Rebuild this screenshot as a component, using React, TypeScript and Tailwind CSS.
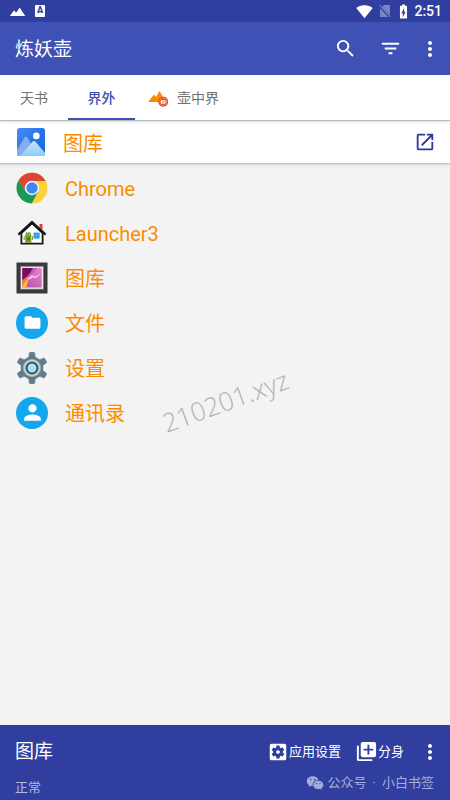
import React from "react";
import {
  MdBatteryChargingFull,
  MdFilterList,
  MdFolder,
  MdLibraryAdd,
  MdMoreVert,
  MdOpenInNew,
  MdPerson,
  MdSearch,
  MdSettingsApplications,
  MdSignalWifi4Bar,
} from "react-icons/md";
import { RiWechatFill } from "react-icons/ri";

function Peaks({ className }: { className: string }) {
  return (
    <svg viewBox="0 0 20 12" className={className} fill="currentColor" aria-hidden="true">
      <path d="M0 12 5.5 4.6 7 6.6 3.4 12ZM4.4 12 8 6.2 9.2 7.7 13 1.2 20 12Z" />
      <path d="M0 12 5.5 4.6 8 8l5-7 7 11Z" />
    </svg>
  );
}

function PeaksBadge() {
  return (
    <svg viewBox="0 0 22 18" className="h-[18px] w-[22px]" aria-hidden="true">
      <path d="M1 13 7 5.5l2 2.4L12.5 2l6.5 11Z" fill="#fb8c00" />
      <circle cx="16.2" cy="12.8" r="5" fill="#e64a19" />
      <circle cx="16.2" cy="12.8" r="3.7" fill="none" stroke="#f7b49d" strokeWidth=".5" />
      <rect x="13.8" y="11.2" width="4.8" height="3.6" rx="1" fill="#fff" />
      <path d="M15 13h2.4" stroke="#e64a19" strokeWidth=".9" />
    </svg>
  );
}

function PhotosIcon() {
  return (
    <svg viewBox="0 0 28 28" className="h-7 w-7" aria-hidden="true">
      <defs>
        <linearGradient id="sky" x1="0" y1="0" x2="1" y2="1">
          <stop offset="0" stopColor="#4a8df2" />
          <stop offset=".55" stopColor="#2472ea" />
          <stop offset="1" stopColor="#1b65df" />
        </linearGradient>
        <linearGradient id="snow" x1="0" y1="0" x2="0" y2="1">
          <stop offset="0" stopColor="#c3e4fc" />
          <stop offset="1" stopColor="#90cbf8" />
        </linearGradient>
        <clipPath id="photo-frame">
          <rect width="28" height="28" rx="2.5" />
        </clipPath>
      </defs>
      <g clipPath="url(#photo-frame)">
        <rect width="28" height="28" fill="url(#sky)" />
        <path d="M0 22 7.5 9.5Q9 7.5 10.5 9.5L21 28H0Z" fill="#83aeea" />
        <path d="M3 28 15.5 13.8q1.5-1.8 3 0L28 25v3Z" fill="url(#snow)" />
        <circle cx="19.3" cy="7.9" r="3.3" fill="#fff" />
      </g>
    </svg>
  );
}

function ChromeIcon() {
  return (
    <svg viewBox="0 0 32 32" className="h-8 w-8" aria-hidden="true">
      <circle cx="16" cy="16" r="15.5" fill="#fdd03c" />
      <path d="M16 16 9.8 19.6 2.6 8.2A15.5 15.5 0 0 0 15.7 31.5L22.2 19.6Z" fill="#169a5b" />
      <path d="M2.6 8.2A15.5 15.5 0 0 1 29.6 8.9H16A7.1 7.1 0 0 0 9.8 19.6Z" fill="#dc4637" />
      <circle cx="16" cy="16" r="7.2" fill="#f4f4f4" />
      <circle cx="16" cy="16" r="5.7" fill="#4285f4" />
    </svg>
  );
}

function HouseIcon() {
  return (
    <svg viewBox="0 0 32 32" className="h-8 w-8" aria-hidden="true">
      <path d="M23.5 7h3v6l-3-2.8Z" fill="#e53935" />
      <path d="M5.4 16 16 6.3 26.6 16v10.6H5.4Z" fill="#fff" stroke="#161616" strokeWidth="1.8" />
      <path d="M2.4 17.6 16 5.2l13.6 12.4" fill="none" stroke="#161616" strokeWidth="2.4" />
      <path d="M9.3 18.5a3 3 0 0 1 6 0v7.2h-6Z" fill="#769b22" />
      <path d="m10.2 14.8.9 1.4m3.3-1.4-.9 1.4" stroke="#769b22" strokeWidth=".8" />
      <path d="M8.2 19v4m8.2-4v4" stroke="#769b22" strokeWidth="1" />
      <path d="M10.8 17.6h.8m1.4 0h.8" stroke="#fff" strokeWidth=".9" />
      <path d="M11 20.5h2.8v2.6H11Z" fill="#50751a" />
      <rect x="17.6" y="15.6" width="6" height="6" fill="#2999e6" />
      <path d="M20.6 15.6v6m-3-3h6" stroke="#67baf0" strokeWidth=".5" />
    </svg>
  );
}

function FrameIcon() {
  return (
    <svg viewBox="0 0 32 32" className="h-8 w-8" aria-hidden="true">
      <defs>
        <linearGradient id="petal" x1="0" y1="1" x2="1" y2="0">
          <stop offset="0" stopColor="#b44ca0" />
          <stop offset="1" stopColor="#e985d3" />
        </linearGradient>
      </defs>
      <rect x=".5" y=".5" width="31" height="31" fill="#38383c" />
      <rect x="4" y="3.8" width="24" height="24" fill="#77777b" />
      <rect x="5" y="4.8" width="22" height="22" fill="#eee6ea" />
      <rect x="6.3" y="6.1" width="19.4" height="19.4" fill="url(#petal)" />
      <path d="M6.3 6.1h11L13 13l-6.7 5Z" fill="#74105c" />
      <path d="m6.3 19 5.2-4.3 2.2 1.5-4 9.3H6.3Z" fill="#f57c32" />
      <path d="m6.3 24 6-8-2 9.5h-4Z" fill="#fdc044" />
      <path d="m11 17 5-4 3 1.5 6-3-5 4.5-3.5-.5-3 2Z" fill="#f8c6e8" />
      <path d="m12 13 7-6.9h2L15 13Z" fill="#c955ae" />
    </svg>
  );
}

function GearIcon() {
  const teeth = [0, 60, 120, 180, 240, 300];
  return (
    <svg viewBox="0 0 32 32" className="h-8 w-8" aria-hidden="true">
      {teeth.map((angle) => (
        <path
          key={angle}
          d="M10.6 8 12.8 5 13.3.8Q13.4.3 14 .3h4q.6 0 .7.5L19.2 5l2.2 3Z"
          fill="#607d8b"
          stroke="#607d8b"
          strokeWidth=".5"
          transform={`rotate(${angle} 16 16)`}
        />
      ))}
      <circle cx="16" cy="16" r="11.2" fill="#607d8b" />
      <circle cx="16" cy="16" r="9" fill="#a7b7bd" />
      <circle cx="16" cy="16" r="8" fill="#cbd8dc" />
      <circle cx="16" cy="16" r="6.5" fill="#36505d" />
      <circle cx="16" cy="16" r="4.5" fill="#a8dcfb" />
    </svg>
  );
}

function Disc({ children }: { children: React.ReactNode }) {
  return (
    <span className="flex h-8 w-8 items-center justify-center rounded-full bg-[#15a7ee] text-white">
      {children}
    </span>
  );
}

const apps = [
  { id: "chrome", name: "Chrome", icon: <ChromeIcon /> },
  { id: "launcher", name: "Launcher3", icon: <HouseIcon /> },
  { id: "gallery", name: "图库", icon: <FrameIcon /> },
  { id: "files", name: "文件", icon: <Disc><MdFolder size={19} /></Disc> },
  { id: "settings", name: "设置", icon: <GearIcon /> },
  { id: "contacts", name: "通讯录", icon: <Disc><MdPerson size={25} /></Disc> },
];

export default function App() {
  return (
    <div className="relative flex min-h-screen flex-col bg-[#f3f3f3] font-['Roboto','Noto_Sans_CJK_SC',sans-serif]">
      <div className="flex h-[22px] items-center bg-[#303f9f] px-2 text-white">
        <Peaks className="ml-0.5 h-[9px] w-[15px]" />
        <span className="ml-2.5 flex h-3 w-2.5 items-center justify-center rounded-[1px] bg-white text-[9px] font-black text-[#303f9f]">
          A
        </span>
        <div className="ml-auto flex items-center">
          <MdSignalWifi4Bar size={17} />
          <svg viewBox="0 0 12 14" className="ml-1.5 h-[14px] w-3" aria-hidden="true">
            <path d="M5 1h6v12H1V5Z" fill="#7985c8" />
            <path d="m0 1.5 11.5 12" stroke="#303f9f" strokeWidth="2.4" />
            <path d="m.5 1 11 12" stroke="#8d98d2" strokeWidth="1" />
          </svg>
          <MdBatteryChargingFull size={17} className="ml-1" />
          <span className="ml-0.5 text-sm leading-4 font-medium">2:51</span>
        </div>
      </div>

      <header className="flex h-[53px] items-center bg-[#3f51b5] pr-2 pl-[15px] text-white">
        <h1 className="pt-1 text-[19px]">炼妖壶</h1>
        <button type="button" aria-label="搜索" className="ml-auto">
          <MdSearch size={23} />
        </button>
        <button type="button" aria-label="筛选" className="ml-[22px]">
          <MdFilterList size={23} />
        </button>
        <button type="button" aria-label="更多" className="ml-4">
          <MdMoreVert size={24} />
        </button>
      </header>

      <nav className="z-10 flex h-[46px] border-b border-[#b9bcbe] bg-white text-sm text-[#707070] shadow-sm">
        <button type="button" className="w-[68px]">天书</button>
        <button type="button" className="w-[67px] border-b-2 border-[#3f51b5] pt-0.5 font-medium text-[#3f51b5]">
          界外
        </button>
        <button type="button" className="flex items-center gap-2 px-3">
          <PeaksBadge />
          壶中界
        </button>
      </nav>

      <div className="flex h-[43px] items-center border-b border-[#c4c4c4] bg-white pr-3.5 pl-[17px] shadow-sm">
        <PhotosIcon />
        <span className="ml-[18px] pt-1 text-xl text-[#fb8c00]">图库</span>
        <button type="button" aria-label="打开" className="ml-auto text-[#3039a0]">
          <MdOpenInNew size={22} />
        </button>
      </div>

      <main className="flex-1 pt-px">
        <ul>
          {apps.map((app) => (
            <li key={app.id}>
              <button type="button" className="flex h-[45px] w-full items-center gap-[17px] px-4 text-left">
                {app.icon}
                <span className="pt-0.5 text-xl text-[#fb8c00]">{app.name}</span>
              </button>
            </li>
          ))}
        </ul>
      </main>

      <span className="pointer-events-none absolute top-[383px] left-[159px] -rotate-[20deg] font-['Open_Sans',sans-serif] text-[26px] leading-9 font-light text-[#b2b2b2]">
        210201.xyz
      </span>

      <footer className="bg-[#303f9f] pr-2 pl-[15px] text-white">
        <div className="flex h-[49px] items-center pt-1">
          <h2 className="pt-0.5 text-[19px]">图库</h2>
          <button type="button" className="ml-auto flex items-center text-[13px]">
            <MdSettingsApplications size={22} />
            应用设置
          </button>
          <button type="button" className="ml-3.5 flex items-center text-[13px]">
            <MdLibraryAdd size={23} />
            分身
          </button>
          <button type="button" aria-label="更多" className="ml-3.5">
            <MdMoreVert size={24} />
          </button>
        </div>
        <div className="flex h-[26px] items-start justify-between pr-2">
          <span className="pt-1 text-[13px] leading-5 text-[#b3b9dd]">正常</span>
          <span className="flex items-center gap-1 text-[13px] leading-[14px] text-[#a5add9]">
            <RiWechatFill size={18} />
            <span className="flex gap-1.5">
              <span>公众号</span>
              <span>·</span>
              <span>小白书签</span>
            </span>
          </span>
        </div>
      </footer>
    </div>
  );
}
